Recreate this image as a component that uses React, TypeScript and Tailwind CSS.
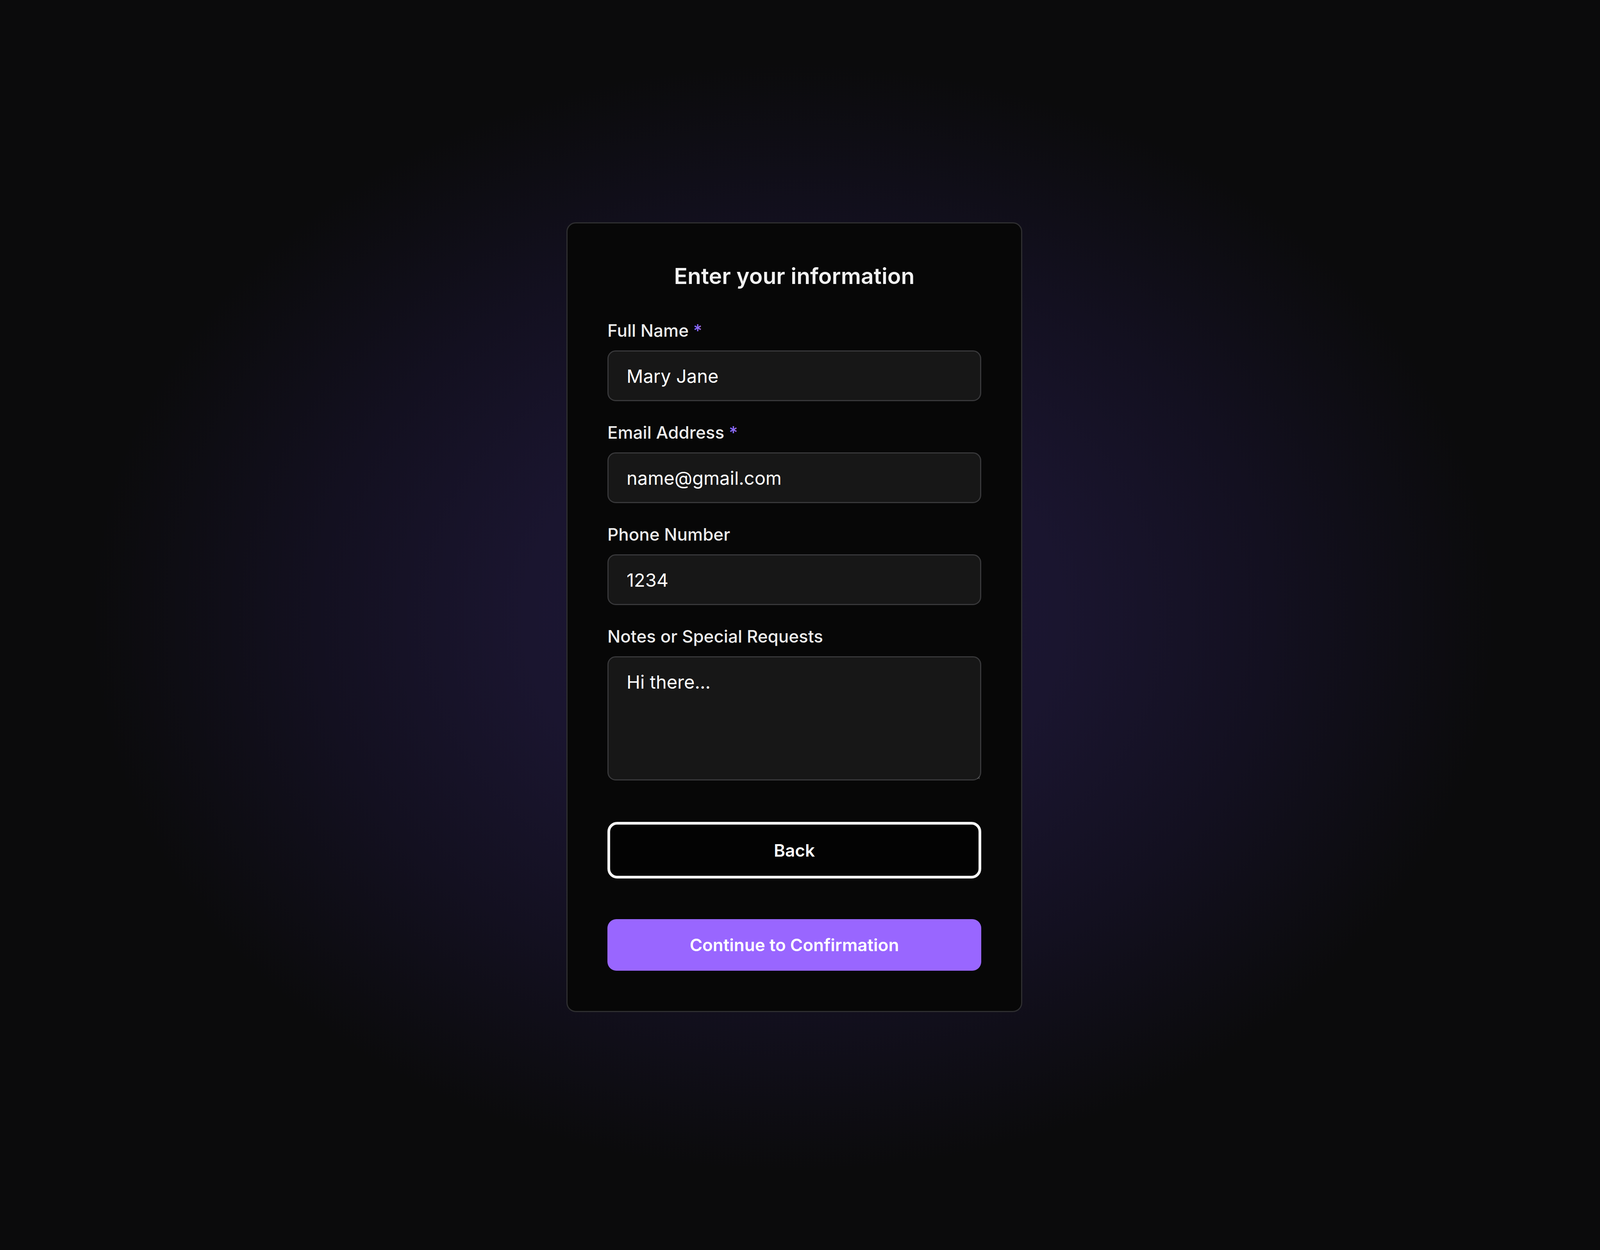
import { useState } from "react";

const fields = [
  { id: "name", label: "Full Name", required: true, value: "Mary Jane", type: "text" },
  { id: "email", label: "Email Address", required: true, value: "name@gmail.com", type: "email" },
  { id: "phone", label: "Phone Number", required: false, value: "1234", type: "tel" },
];

const Label = ({ htmlFor, text, required }: { htmlFor: string; text: string; required?: boolean }) => (
  <label htmlFor={htmlFor} className="mb-[18px] block text-[44px] leading-[1.5] font-medium text-[#ededed]">
    {text}
    {required && <span className="text-[#8d6bf5]"> *</span>}
  </label>
);

export default function App() {
  const [notes, setNotes] = useState("Hi there...");

  return (
    <div className="flex min-h-screen w-full items-center justify-center bg-[#0b0b0c] bg-[radial-gradient(ellipse_1800px_1420px_at_49.6%_49.4%,#1e1738_0%,#1a152f_38%,#131020_68%,#0b0b0c_100%)] pr-[29px] pb-[40px] font-['Inter','Noto_Sans',sans-serif]">
      <div className="w-[1167px] rounded-[24px] border-[3px] border-[#2e2e30] bg-[#070707] px-[102px] pt-[101px] pb-[103px]">
        <h2 className="text-center text-[57px] leading-[1.18] font-semibold text-[#f2f2f2]">Enter your information</h2>

        <form className="mt-[73px] flex flex-col gap-[47px]" onSubmit={(e) => e.preventDefault()}>
          {fields.map((f) => (
            <div key={f.id}>
              <Label htmlFor={f.id} text={f.label} required={f.required} />
              <input
                id={f.id}
                type={f.type}
                defaultValue={f.value}
                className="block h-[130px] w-full rounded-[21px] border-[3px] border-[#38383a] bg-[#171717] px-[46px] text-[47px] text-white outline-none"
              />
            </div>
          ))}

          <div>
            <Label htmlFor="notes" text="Notes or Special Requests" />
            <textarea
              id="notes"
              value={notes}
              onChange={(e) => setNotes(e.target.value)}
              className="block h-[318px] w-full rounded-[21px] border-[3px] border-[#38383a] bg-[#171717] px-[46px] pt-[28px] text-[47px] leading-[1.5] text-white outline-none"
            />
          </div>
        </form>

        <button
          type="button"
          className="mt-[106px] flex h-[145px] w-full items-center justify-center rounded-[25px] border-[7px] border-[#f5f5f5] bg-[#030303] text-[44px] font-semibold text-white"
        >
          Back
        </button>

        <button
          type="button"
          className="mt-[104px] flex h-[132px] w-full items-center justify-center rounded-[23px] bg-[#9966ff] text-[44px] font-semibold text-white"
        >
          Continue to Confirmation
        </button>
      </div>
    </div>
  );
}
